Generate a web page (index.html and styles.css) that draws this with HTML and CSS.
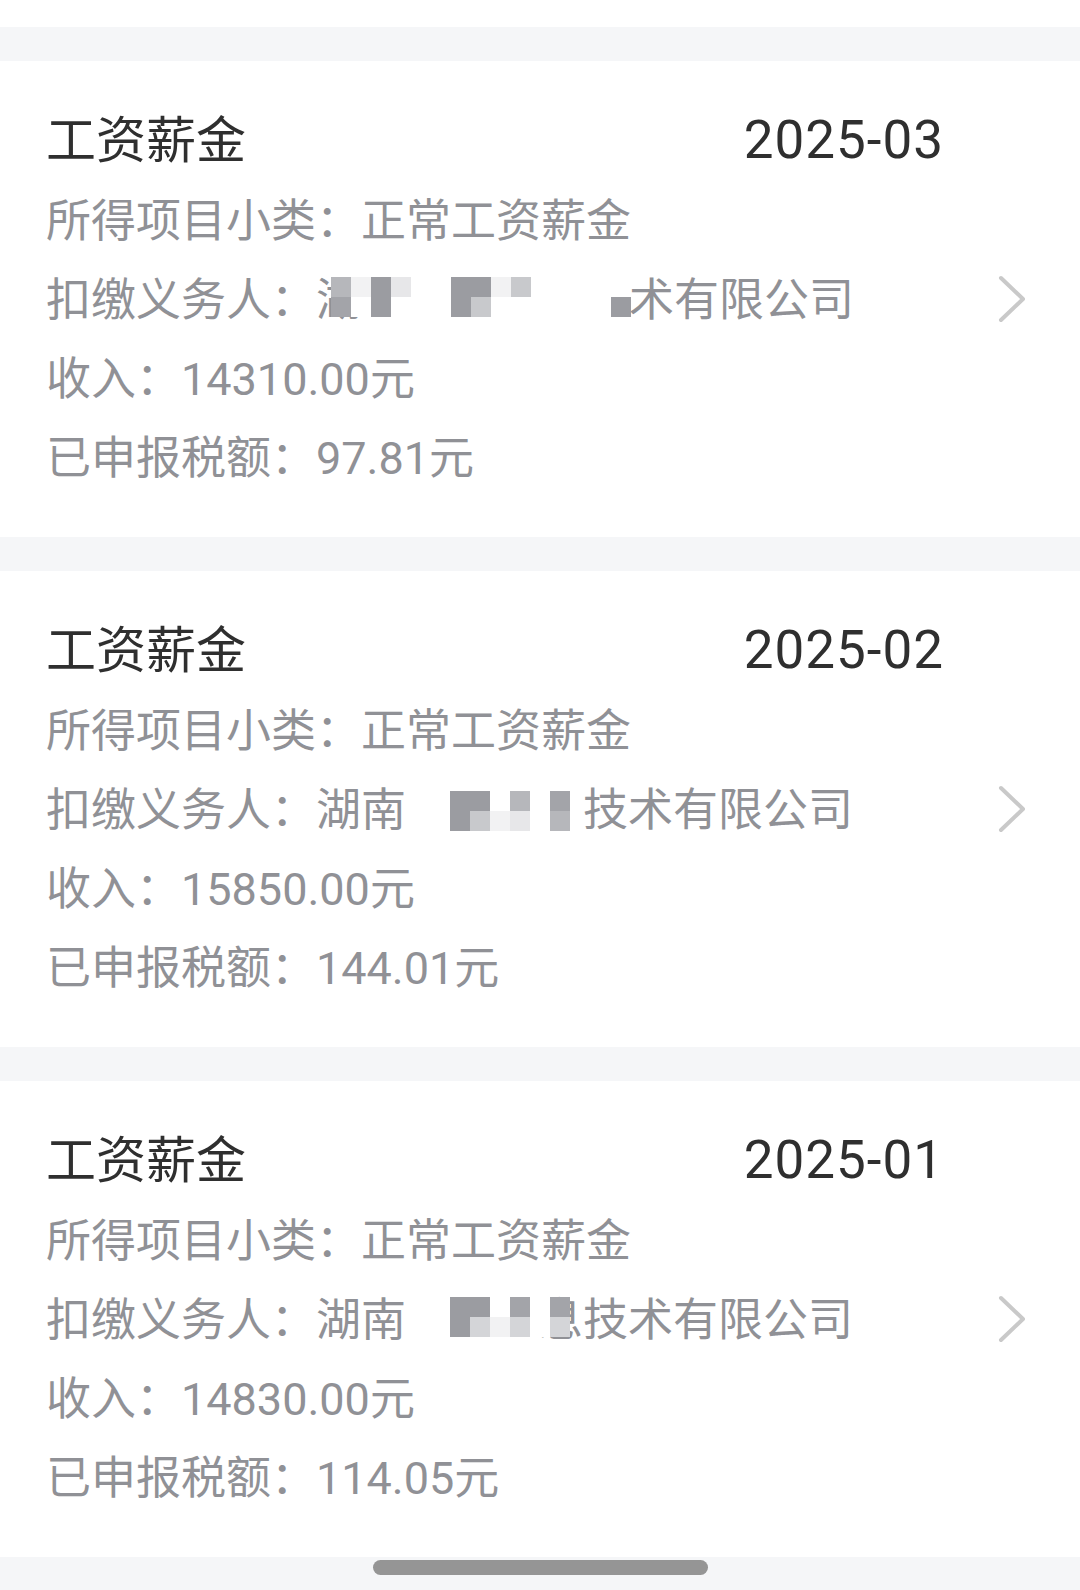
FILE: index.html
```html
<!DOCTYPE html>
<html lang="zh-CN">

<head>
    <meta charset="UTF-8">
    <meta name="viewport" content="width=device-width, initial-scale=1.0">
    <title>收入纳税明细</title>
    <link rel="stylesheet" href="styles.css">
</head>

<body>
    <div class="top-edge"></div>

    <section class="card">
        <div class="card-body">
            <div class="card-head">
                <span class="card-title">工资薪金</span>
                <span class="card-date">2025-03</span>
            </div>
            <div class="card-row">所得项目小类：正常工资薪金</div>
            <div class="card-row">扣缴义务人：湖<span class="mosaic mosaic-1">
                <i class="m3"></i><i class="m2"></i>
                <i class="m7"></i><i></i>
                <i class="m1"></i><i class="m1"></i>
                <i class="m6"></i><i></i>
                <i></i><i></i>
                <i></i><i></i>
                <i class="m1"></i><i class="m1"></i>
                <i class="m1"></i><i class="m4"></i>
                <i class="m7"></i><i></i>
                <i class="m4"></i><i></i>
                <i></i><i></i>
                <i></i><i></i>
                <i></i><i></i>
                <i></i><i></i>
                <i></i><i class="m1"></i>
            </span>术有限公司</div>
            <div class="card-row">收入：14310.00元</div>
            <div class="card-row">已申报税额：97.81元</div>
        </div>
        <svg class="chevron" viewBox="0 0 28 48" width="28" height="48">
            <path d="M3 3 L25 24 L3 45" />
        </svg>
    </section>

    <section class="card">
        <div class="card-body">
            <div class="card-head">
                <span class="card-title">工资薪金</span>
                <span class="card-date">2025-02</span>
            </div>
            <div class="card-row">所得项目小类：正常工资薪金</div>
            <div class="card-row">扣缴义务人：湖南<span class="mosaic mosaic-2">
                <i class="m1"></i><i class="m1"></i>
                <i class="m1"></i><i class="m4"></i>
                <i></i><i class="m7"></i>
                <i class="m3"></i><i class="m6"></i>
                <i></i><i></i>
                <i class="m2"></i><i class="m3"></i>
            </span>技术有限公司</div>
            <div class="card-row">收入：15850.00元</div>
            <div class="card-row">已申报税额：144.01元</div>
        </div>
        <svg class="chevron" viewBox="0 0 28 48" width="28" height="48">
            <path d="M3 3 L25 24 L3 45" />
        </svg>
    </section>

    <section class="card">
        <div class="card-body">
            <div class="card-head">
                <span class="card-title">工资薪金</span>
                <span class="card-date">2025-01</span>
            </div>
            <div class="card-row">所得项目小类：正常工资薪金</div>
            <div class="card-row">扣缴义务人：湖南<span class="mosaic mosaic-3">
                <i class="m1"></i><i class="m1"></i>
                <i class="m1"></i><i class="m5"></i>
                <i></i><i class="m7"></i>
                <i class="m2"></i><i class="m5"></i>
                <i></i><i></i>
                <i class="m2"></i><i class="m5"></i>
            </span>息技术有限公司</div>
            <div class="card-row">收入：14830.00元</div>
            <div class="card-row">已申报税额：114.05元</div>
        </div>
        <svg class="chevron" viewBox="0 0 28 48" width="28" height="48">
            <path d="M3 3 L25 24 L3 45" />
        </svg>
    </section>

    <div class="home">
        <div class="home-bar"></div>
    </div>
</body>

</html>
```

FILE: styles.css
```css
body {
    margin: 0;
    height: 1590px;
    overflow: hidden;
    background-color: #f5f6f8;
    font-family: Roboto, "Noto Sans CJK SC", sans-serif;
}

.top-edge {
    height: 27px;
    background-color: #fff;
}

.card {
    display: flex;
    align-items: center;
    height: 476px;
    margin-top: 34px;
    background-color: #fff;
}

.card-body {
    flex: 1;
    padding: 40px 54px 39px 46px;
}

.card-head {
    display: flex;
    justify-content: space-between;
    align-items: baseline;
    height: 81px;
    line-height: 79px;
    color: #2f2f2f;
}

.card-title {
    font-size: 50px;
}

.card-date {
    font-size: 53px;
    letter-spacing: 1px;
}

.card-row {
    display: flex;
    align-items: center;
    height: 79px;
    line-height: 79px;
    font-size: 45px;
    color: #909196;
    white-space: nowrap;
}

/* 打码区域 */
.mosaic {
    position: relative;
    z-index: 1;
    display: grid;
    grid-template-rows: 20px 20px;
    grid-auto-flow: column;
    grid-auto-columns: 20px;
    background-color: #fff;
}

.mosaic-1 {
    margin: 0 -2px 8px -30px;
}

.mosaic-2 {
    margin: 0 13px 0 44px;
}

.mosaic-3 {
    margin: 0 -32px 8px 44px;
}

.m1 { background-color: #9b9ca1; }
.m2 { background-color: #a3a4a9; }
.m3 { background-color: #b6b7bb; }
.m4 { background-color: #c8c9cc; }
.m5 { background-color: #d4d5d8; }
.m6 { background-color: #e7e7e9; }
.m7 { background-color: #f2f2f3; }

.chevron {
    flex: none;
    margin-right: 54px;
    fill: none;
    stroke: #c9c9c9;
    stroke-width: 4;
    stroke-linecap: round;
    stroke-linejoin: round;
}

.home {
    padding-top: 3px;
}

.home-bar {
    width: 335px;
    height: 15px;
    margin: 0 auto;
    border-radius: 8px;
    background-color: #959595;
}
```
